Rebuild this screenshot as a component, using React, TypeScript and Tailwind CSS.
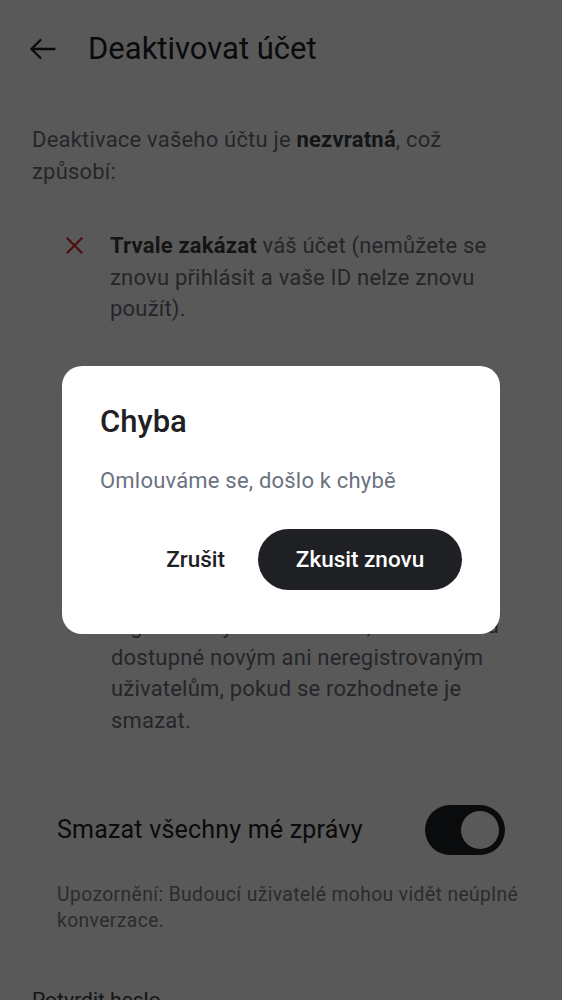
import { Check } from 'lucide-react';

function BackArrow() {
  return (
    <svg width="26" height="24" viewBox="0 0 26 24" fill="none" stroke="currentColor" strokeWidth="2.3" strokeLinecap="round" strokeLinejoin="round">
      <path d="M1.5 12h23" />
      <path d="M10.5 3l-9 9 9 9" />
    </svg>
  );
}

function CrossMark() {
  return (
    <svg width="17" height="17" viewBox="0 0 17 17" fill="none" stroke="currentColor" strokeWidth="2.2" strokeLinecap="square">
      <path d="M1.5 1.5l14 14M15.5 1.5l-14 14" />
    </svg>
  );
}

export default function App() {
  return (
    <div className="relative h-[1000px] overflow-hidden bg-white font-['Roboto',sans-serif]">
      {/* Page */}
      <div className="px-8">
        <header className="-ml-[2px] flex h-[98px] items-center gap-[32px]">
          <span className="text-[#1f2024]">
            <BackArrow />
          </span>
          <h1 className="text-[31px] text-[#1f2024]">Deaktivovat účet</h1>
        </header>

        <p className="mt-[26px] text-[22px] leading-[32px] tracking-[0.2px] text-[#6a6e75]">
          Deaktivace vašeho účtu je <b className="font-bold text-[#3a3d43]">nezvratná</b>, což
          <br />
          způsobí:
        </p>

        <ul className="mt-[42px] flex flex-col gap-[65px] pl-[34px]">
          <li className="flex gap-[27px]">
            <span className="mt-[7px] text-[#dc2626]">
              <CrossMark />
            </span>
            <span className="text-[22px] leading-[31.5px] tracking-[0.2px] text-[#6a6e75]">
              <b className="font-bold text-[#3a3d43]">Trvale zakázat</b> váš účet (nemůžete se
              <br />
              znovu přihlásit a vaše ID nelze znovu
              <br />
              použít).
            </span>
          </li>
          <li className="flex gap-[27px]">
            <span className="mt-[6px] text-[#16a34a]">
              <Check size={18} strokeWidth={2.4} />
            </span>
            <span className="text-[22px] leading-[31.5px] tracking-[0.2px] text-[#6a6e75]">
              <b className="font-bold text-[#3a3d43]">Zachovat</b> vaše zprávy, fotky
              <br />
              a soubory, které jste sdíleli
              <br />
              v konverzacích. Tyto položky
              <br />
              zůstanou viditelné pro ostatní
              <br />
              účastníky konverzací, kteří
              <br />
              je již obdrželi, a pro další
              <br />
              stávající účastníky, kteří jsou
              <br />
              registrovaným uživatelům, ale nebudou
              <br />
              dostupné novým ani neregistrovaným
              <br />
              uživatelům, pokud se rozhodnete je
              <br />
              smazat.
            </span>
          </li>
        </ul>

        <section className="mt-[69px] px-[25px]">
          <div className="flex items-center justify-between">
            <span className="text-[25px] tracking-[0.2px] text-[#1f2024]">Smazat všechny mé zprávy</span>
            <span className="flex h-[50px] w-[80px] items-center justify-end rounded-full bg-[#1f2024] px-[6px]">
              <span className="h-[38px] w-[38px] rounded-full bg-white" />
            </span>
          </div>
          <p className="-mr-[25px] mt-[27px] whitespace-nowrap text-[19.3px] leading-[26px] tracking-[0.4px] text-[#7a7e85]">
            Upozornění: Budoucí uživatelé mohou vidět neúplné
            <br />
            konverzace.
          </p>
        </section>

        <div className="mt-[52px] text-[21px] leading-[28px] text-[#3a3d43]">Potvrdit heslo</div>
      </div>

      {/* Overlay */}
      <div className="absolute inset-0 flex items-center justify-center bg-black/65">
        <div className="w-[438px] rounded-[20px] bg-white px-[38px] pb-[44px] pt-[38px]">
          <h2 className="text-[31px] font-medium leading-[36px] text-[#1f2024]">Chyba</h2>
          <p className="mt-[27px] text-[22px] leading-[28px] tracking-[0.2px] text-[#6b7280]">
            Omlouváme se, došlo k chybě
          </p>
          <div className="mt-[34px] flex items-center justify-end gap-[33px]">
            <button className="text-[22.5px] font-medium text-[#1f2024]">Zrušit</button>
            <button className="h-[61px] w-[204px] rounded-full bg-[#1f2024] text-[22.5px] font-medium text-white">
              Zkusit znovu
            </button>
          </div>
        </div>
      </div>
    </div>
  );
}
